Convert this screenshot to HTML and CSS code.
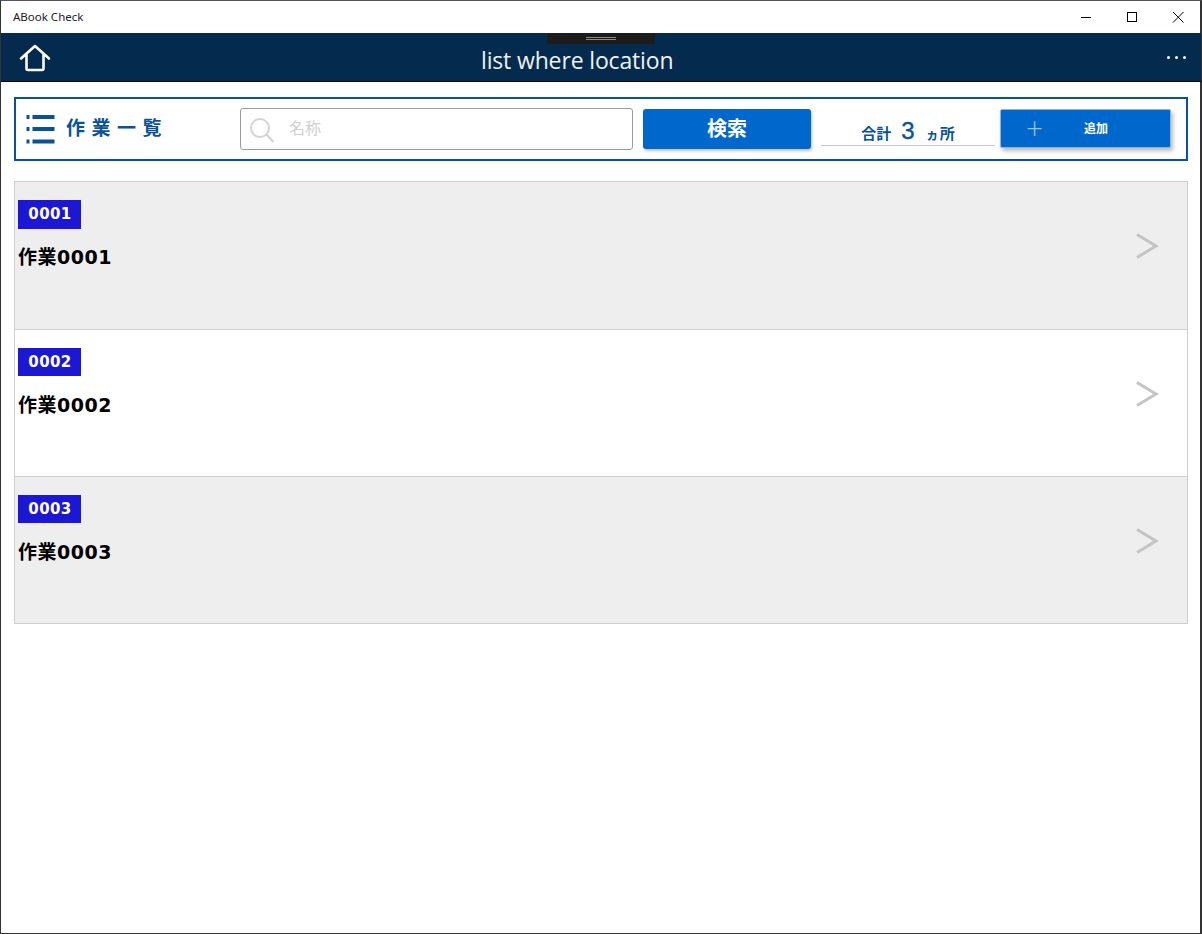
FILE: index.html
```html
<!DOCTYPE html>
<html lang="ja">
<head>
<meta charset="utf-8">
<title>ABook Check</title>
<link rel="stylesheet" href="styles.css">
</head>
<body>
<div class="window">
  <div class="titlebar">
    <span class="app-name">ABook Check</span>
    <div class="win-controls">
      <svg class="win-btn" width="46" height="32" viewBox="0 0 46 32"><path d="M18 16.500H28" stroke="#000" fill="none"/></svg>
      <svg class="win-btn" width="46" height="32" viewBox="0 0 46 32"><rect x="18.500" y="11.500" width="9" height="9" stroke="#000" fill="none"/></svg>
      <svg class="win-btn" width="46" height="32" viewBox="0 0 46 32"><path d="M18 11L28.500 21.500M28.500 11L18 21.500" stroke="#000" fill="none"/></svg>
    </div>
  </div>
  <header class="appbar">
    <div class="handle"><span class="grip"></span></div>
    <svg class="home" width="32" height="28" viewBox="0 0 32 28"><path d="M2 14.500L16 2L30 14.500M7.500 11V24.500Q7.500 26 9 26H23Q24.500 26 24.500 24.500V11" fill="none" stroke="#fff" stroke-width="2.600" stroke-linecap="round" stroke-linejoin="round"/></svg>
    <h1 class="page-title">list where location</h1>
    <div class="more"><i></i><i></i><i></i></div>
  </header>
  <main class="content">
    <section class="toolbar">
      <div class="heading">
        <svg width="30" height="30" viewBox="0 0 30 30"><g fill="#0a5296"><rect x="0.500" y="1" width="3" height="4"/><rect x="6.500" y="1" width="22" height="4"/><rect x="0.500" y="13" width="3" height="4"/><rect x="6.500" y="13" width="22" height="4"/><rect x="0.500" y="25.500" width="3" height="4"/><rect x="6.500" y="25.500" width="22" height="4"/></g></svg>
        <span class="heading-text">作 業 一 覧</span>
      </div>
      <div class="search">
        <svg width="24" height="25" viewBox="0 0 24 25"><circle cx="10" cy="10" r="9" fill="none" stroke="#d4d4d4" stroke-width="2"/><path d="M16.500 16.500L23.500 24" stroke="#d4d4d4" stroke-width="2.200"/></svg>
        <span class="placeholder">名称</span>
      </div>
      <button class="btn search-btn">検索</button>
      <div class="total"><span>合計</span><b>3</b><span class="unit"><small>ヵ</small>所</span></div>
      <button class="btn add-btn"><span class="plus">＋</span><span class="add-label">追加</span></button>
    </section>
    <section class="list">
      <article class="row shade"><div><span class="badge">0001</span><p class="name">作業0001</p></div><svg class="chev" width="23" height="28" viewBox="0 0 23 28"><path d="M1 2.500L20 14L1 25.500" fill="none" stroke="#c4c4c4" stroke-width="3"/></svg></article>
      <article class="row"><div><span class="badge">0002</span><p class="name">作業0002</p></div><svg class="chev" width="23" height="28" viewBox="0 0 23 28"><path d="M1 2.500L20 14L1 25.500" fill="none" stroke="#c4c4c4" stroke-width="3"/></svg></article>
      <article class="row shade"><div><span class="badge">0003</span><p class="name">作業0003</p></div><svg class="chev" width="23" height="28" viewBox="0 0 23 28"><path d="M1 2.500L20 14L1 25.500" fill="none" stroke="#c4c4c4" stroke-width="3"/></svg></article>
    </section>
  </main>
</div>
</body>
</html>
```
FILE: styles.css
```css
* { box-sizing: border-box; }
html, body { margin: 0; height: 100%; background: #fff; overflow: hidden; }
.window {
  width: 1202px; height: 934px;
  border: 1px solid #333; border-right-width: 2px;
  border-top-color: #555;
  display: flex; flex-direction: column;
  font-family: "Noto Sans", "Noto Sans CJK JP", sans-serif;
}
.titlebar { height: 32px; flex: none; display: flex; align-items: center; justify-content: space-between; padding-left: 12px; background: #fff; }
.app-name { font-size: 11.5px; color: #222; margin-bottom: 2px; }
.win-controls { display: flex; margin-right: -1px; }
.win-btn { display: block; }
.appbar { height: 49px; flex: none; background: #042a4e; border-bottom: 1px solid #000; display: flex; align-items: center; position: relative; padding-left: 18px; margin-right: -1px; }
.handle { position: absolute; left: 546px; top: 0; width: 108px; height: 11px; background: #1c1c1c; display: flex; justify-content: center; padding-top: 4px; }
.grip { width: 30px; height: 3px; border-top: 1px solid #888; border-bottom: 1px solid #888; }
.home { flex: none; margin-top: 1px; }
.page-title { position: absolute; left: 480px; top: 8px; margin: 0; font-size: 23px; line-height: 38px; font-weight: 400; color: #eef2f6; font-family: "Open Sans", sans-serif; letter-spacing: -0.15px; }
.more { position: absolute; right: 15px; top: 23px; display: flex; gap: 5px; }
.more i { width: 3px; height: 3px; background: #fff; border-radius: 50%; }
.content { flex: 1; padding: 15px 12px 0 13px; }
.toolbar { height: 64px; border: 2px solid #0a5296; display: flex; align-items: center; position: relative; padding-left: 10px; }
.heading { display: flex; align-items: center; gap: 10px; width: 214px; flex: none; }
.heading svg { display: block; }
.heading-text { font-size: 19px; font-weight: 700; color: #0a5296; white-space: pre; letter-spacing: 0.8px; margin-bottom: 4px; }
.search { width: 393px; height: 42px; flex: none; border: 1px solid #9b9b9b; border-radius: 3px; display: flex; align-items: center; padding-left: 9px; gap: 15px; }
.search svg { margin-top: 3px; flex: none; }
.placeholder { font-size: 16px; color: #d0d0d0; margin-bottom: 4px; }
.btn { border: 0; background: #0067cc; color: #fff; padding: 0; font-family: inherit; font-weight: 700; flex: none; }
.search-btn { width: 168px; height: 40px; margin-left: 10px; padding-bottom: 4px; border-radius: 3px; font-size: 20px; box-shadow: 1px 2px 3px rgba(0,0,0,.25); }
.total { width: 174px; margin-left: 10px; height: 34px; margin-top: 0; padding-top: 2px; border-bottom: 1px solid #ccc; display: flex; align-items: baseline; justify-content: center; color: #0a5296; font-weight: 700; font-size: 15px; line-height: 34px; }
.total b { font-size: 24px; margin: 0 11px 0 10px; font-family: "Liberation Sans", sans-serif; font-weight: 400; -webkit-text-stroke: .4px #0a5296; }
.unit small { font-size: 13px; margin-right: 1px; }
.add-btn { width: 171px; height: 39px; margin: -2px 0 0 5px; border: 1px solid #8fb3d6; border-radius: 2px; display: flex; align-items: center; box-shadow: 2px 3px 4px rgba(0,0,0,.28); }
.plus { width: 67px; text-align: center; font-size: 19px; font-weight: 400; color: #9cc0e4; }
.add-label { width: 56px; text-align: center; font-size: 12px; padding-bottom: 1px; }
.list { margin-top: 20px; border: 1px solid #cfcfcf; }
.row { height: 147px; display: flex; justify-content: space-between; padding: 18px 28px 0 3px; border-bottom: 1px solid #cfcfcf; background: #fff; font-family: "DejaVu Sans", "Noto Sans CJK JP", sans-serif; }
.row:first-child { height: 148px; }
.row:last-child { border-bottom: 0; height: 146px; }
.shade { background: #eee; }
.badge { display: block; width: 63px; height: 28px; background: #1c17d2; color: #fff; font-size: 15px; font-weight: 700; text-align: center; line-height: 28px; letter-spacing: .4px; padding-left: 1px; }
.row:first-child .badge { height: 29px; line-height: 28px; }
.name { margin: 14px 0 0; font-size: 19px; font-weight: 700; line-height: 30px; color: #000; letter-spacing: .5px; }
.row:first-child .name { margin-top: 13px; }
.chev { margin-top: 32px; flex: none; }
```
